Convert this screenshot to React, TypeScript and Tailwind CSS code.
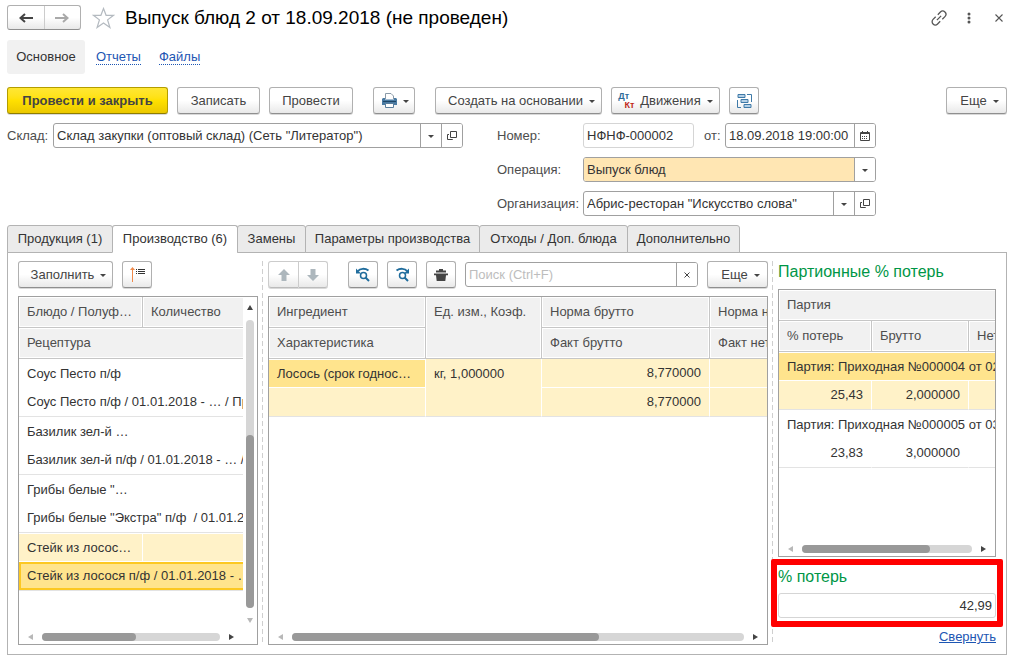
import type { ReactNode } from 'react';
import { clsx } from 'clsx';

const BUTTON =
  'flex h-[27px] shrink-0 items-center justify-center rounded-[3px] border border-[#b0b0b0] border-b-[#8f8f8f] bg-linear-to-b from-white from-50% to-[#e9e9e9] text-[#444] shadow-[0_1px_0_#d9d9d9]';
const HEAD =
  'h-[31px] overflow-hidden border-b border-[#c6c6c6] bg-[#f1f1f1] px-2 text-left font-normal text-ellipsis whitespace-nowrap text-[#4d4d4d] shadow-[inset_0_0_0_1px_#fff]';
const CELL = 'h-[29px] overflow-hidden px-2 whitespace-nowrap';

function Caret() {
  return (
    <svg className="mt-0.5 h-[3px] w-[6px] shrink-0" viewBox="0 0 6 3" fill="#444">
      <path d="M0 0h6L3 3z" />
    </svg>
  );
}

interface ButtonProps {
  children: ReactNode;
  label?: string;
  className?: string;
}

function Button({ children, label, className }: ButtonProps) {
  return (
    <button type="button" aria-label={label} className={clsx(BUTTON, className)}>
      {children}
    </button>
  );
}

function MenuButton({ children, label, className }: ButtonProps) {
  return (
    <Button label={label} className={clsx('gap-1.5', className)}>
      {children}
      <Caret />
    </Button>
  );
}

interface FieldProps {
  id: string;
  value: string;
  label?: string;
  className?: string;
  inputClass?: string;
  children?: ReactNode;
}

function Field({ id, value, label, className, inputClass, children }: FieldProps) {
  return (
    <div className={clsx('flex h-[25px] min-w-0 overflow-hidden rounded-[3px] border', className)}>
      <input
        id={id}
        aria-label={label}
        defaultValue={value}
        className={clsx('w-full min-w-0 flex-1 px-[3px] text-[#333] outline-none', inputClass)}
      />
      {children}
    </div>
  );
}

function FieldButton({ label, children }: { label: string; children: ReactNode }) {
  return (
    <button
      type="button"
      aria-label={label}
      className="flex w-[21px] shrink-0 items-center justify-center border-l border-[#a0a0a0] bg-white"
    >
      {children}
    </button>
  );
}

function OpenIcon() {
  return (
    <svg className="size-[10px]" viewBox="0 0 10 10" fill="none" stroke="#444">
      <path d="M3.5.5h6v6h-6zM2 3.5H.5v5h5V8" />
    </svg>
  );
}

function CalendarIcon() {
  return (
    <svg className="size-[10px]" viewBox="0 0 10 10" fill="none" stroke="#444">
      <path d="M.5 1.5h9v8h-9z" />
      <path d="M0 2.5h10M2.5 0v2M7.5 0v2" />
      <path d="M2 5.5h6M2 7.5h6" strokeDasharray="1 1" />
    </svg>
  );
}

function HistoryIcon({ flip }: { flip?: boolean }) {
  return (
    <svg className="h-[16px] w-[18px]" viewBox="0 0 18 16" fill="none" stroke="#1f6c9c">
      <g transform={flip ? 'translate(18 0) scale(-1 1)' : undefined}>
        <path d="M4 4C6 1.300 11 1.200 14.500 3.500" strokeWidth="2" />
        <path d="M2 1.500v5h5z" fill="#1f6c9c" stroke="none" />
      </g>
      <circle cx="9.500" cy="8.500" r="3" strokeWidth="1.500" />
      <path d="m11.500 10.500 3.500 3.500" strokeWidth="2" />
    </svg>
  );
}

function ArrowIcon({ down }: { down?: boolean }) {
  return (
    <svg className={clsx('size-3', down && 'rotate-180')} viewBox="0 0 12 12" fill="#adb7bd">
      <path d="M6 0 12 6H8.500v6h-5V6H0z" />
    </svg>
  );
}

function HScroll({ thumb }: { thumb: string }) {
  return (
    <div className="mt-auto flex h-[15px] shrink-0 items-center gap-[9px] px-[9px]">
      <svg className="h-[6px] w-[5px] shrink-0" viewBox="0 0 5 6" fill="#b8b8b8">
        <path d="M5 0v6L0 3z" />
      </svg>
      <div className="h-2 flex-1 rounded-full bg-[#d6d6d6]">
        <div className={clsx('h-2 rounded-full bg-[#999]', thumb)} />
      </div>
      <svg className="h-[6px] w-[5px] shrink-0" viewBox="0 0 5 6" fill="#444">
        <path d="M0 0v6l5-3z" />
      </svg>
    </div>
  );
}

function Divider() {
  return (
    <div className="mr-[5px] ml-1 w-px shrink-0 bg-[repeating-linear-gradient(#cfcfcf_0_5px,#fff_5px_8px)]" />
  );
}

const tabs = [
  { title: 'Продукция (1)', width: 'w-[106px]' },
  { title: 'Производство (6)', width: 'w-[126px]', active: true },
  { title: 'Замены', width: 'w-[69px]' },
  { title: 'Параметры производства', width: 'w-[175px]' },
  { title: 'Отходы / Доп. блюда', width: 'w-[149px]' },
  { title: 'Дополнительно', width: 'w-[113px]' },
];

const dishes = [
  { name: 'Соус Песто п/ф', recipe: 'Соус Песто п/ф / 01.01.2018 - … / Производство' },
  { name: 'Базилик зел-й …', recipe: 'Базилик зел-й п/ф / 01.01.2018 - … / Производство' },
  { name: 'Грибы белые "…', recipe: 'Грибы белые "Экстра" п/ф\u00a0 / 01.01.2018 - …' },
];

const batches = [
  { name: 'Партия: Приходная №000004 от 02.09.2018', loss: '25,43', gross: '2,000000', active: true },
  { name: 'Партия: Приходная №000005 от 03.09.2018', loss: '23,83', gross: '3,000000' },
];

function Header() {
  return (
    <header className="flex h-[25px] items-center">
      <div className="flex h-[25px] w-[74px] rounded-[3px] border border-[#b0b0b0] border-b-[#8f8f8f] bg-linear-to-b from-white from-50% to-[#e9e9e9]">
        <button type="button" aria-label="Назад" className="flex flex-1 items-center justify-center">
          <svg className="h-[10px] w-[14px]" viewBox="0 0 14 10" fill="none" stroke="#444" strokeWidth="2">
            <path d="M14 5H2M6 1 1.500 5 6 9" />
          </svg>
        </button>
        <button
          type="button"
          aria-label="Вперед"
          className="flex flex-1 items-center justify-center border-l border-[#ccc]"
        >
          <svg className="h-[10px] w-[14px]" viewBox="0 0 14 10" fill="none" stroke="#a9a9a9" strokeWidth="2">
            <path d="M0 5h12M8 1l4.500 4L8 9" />
          </svg>
        </button>
      </div>
      <button type="button" aria-label="В избранное" className="ml-[11px]">
        <svg className="h-[22px] w-[23px]" viewBox="0 0 23 22" fill="none" stroke="#b4bac0" strokeWidth="1.200">
          <path d="m11.500 1.500 2.600 6.800h7.400l-5.900 4.600 2.300 7.600-6.400-4.600-6.400 4.600 2.300-7.600L1.500 8.300h7.400z" />
        </svg>
      </button>
      <h1 className="ml-[10px] flex-1 text-[19px] text-black">Выпуск блюд 2 от 18.09.2018 (не проведен)</h1>
      <button type="button" aria-label="Ссылка">
        <svg className="size-4" viewBox="0 0 16 16" fill="none" stroke="#555" strokeWidth="1.300">
          <g transform="rotate(-45 8 8)">
            <path d="M6.500 4.800H2.800a3.200 3.200 0 0 0 0 6.400h3.700M9.500 4.800h3.700a3.200 3.200 0 0 1 0 6.400H9.500M5 8h6" />
          </g>
        </svg>
      </button>
      <button type="button" aria-label="Меню" className="ml-[20px]">
        <svg className="h-3 w-[4px]" viewBox="0 0 4 12" fill="#555">
          <circle cx="2" cy="2" r="1.500" />
          <circle cx="2" cy="6" r="1.500" />
          <circle cx="2" cy="10" r="1.500" />
        </svg>
      </button>
      <button type="button" aria-label="Закрыть" className="mr-1 ml-[24px]">
        <svg className="size-2" viewBox="0 0 8 8" stroke="#555" strokeWidth="1.100">
          <path d="m.5.5 7 7m0-7-7 7" />
        </svg>
      </button>
    </header>
  );
}

function Toolbar() {
  return (
    <div className="mt-[13px] flex">
      <button
        type="button"
        className="h-[27px] w-[161px] rounded-[3px] border border-[#b39d00] border-b-[#8f7d00] bg-linear-to-b from-[#ffe733] via-[#ffe000] to-[#ebc800] font-bold text-[#444] shadow-[0_1px_0_#d9d9d9]"
      >
        Провести и закрыть
      </button>
      <Button className="ml-[9px] w-[83px]">Записать</Button>
      <Button className="ml-[9px] w-[84px]">Провести</Button>
      <MenuButton label="Печать" className="ml-5 w-[42px] pl-0.5">
        <svg className="h-[15px] w-[15px]" viewBox="0 0 15 15">
          <path d="M3.500 6V.5h5.500l2.500 2.500v3" fill="#fff" stroke="#8a9aa8" />
          <path d="M1 5h2v1.500h9V5h2l1 1v6H0V6z" fill="#4a7ba3" />
          <path d="M1 8.500h13" stroke="#1e4666" />
          <path d="M3.500 10.500h8v4h-8z" fill="#fff" stroke="#5b7f9d" />
        </svg>
      </MenuButton>
      <MenuButton className="ml-5 w-[167px] pl-1.5">Создать на основании</MenuButton>
      <MenuButton className="ml-[9px] w-[109px]">
        <span className="relative h-[18px] w-4 text-[9px] leading-[9px] font-bold">
          <span className="absolute top-0 left-0 text-[#2d6b98]">Дт</span>
          <span className="absolute right-0 bottom-0 text-[#c0281c]">Кт</span>
        </span>
        Движения
      </MenuButton>
      <Button label="Структура подчиненности" className="ml-[9px] w-[30px]">
        <svg className="h-[14px] w-[15px]" viewBox="0 0 15 14" fill="#b5d0e6" stroke="#3f7aa8">
          <path d="M1 .5h7v3H1zM4 5.500h7v3H4zM7 10.500h7v3H7z" />
          <path d="M10 .5h4.500V8M.5 6v7.500H4" fill="none" />
        </svg>
      </Button>
      <MenuButton className="ml-auto w-[61px] pl-1.5">Еще</MenuButton>
    </div>
  );
}

function DocumentForm() {
  return (
    <div className="mt-[9px] grid grid-cols-[490fr_379fr_131fr] text-[#4d4d4d]">
      <div className="flex h-[25px] min-w-0 items-center pr-[34px]">
        <label htmlFor="store" className="w-[46px] shrink-0">
          Склад:
        </label>
        <Field
          id="store"
          value={'Склад закупки (оптовый склад) (Сеть "Литератор")'}
          className="flex-1 border-[#a0a0a0]"
        >
          <FieldButton label="Выбрать склад">
            <Caret />
          </FieldButton>
          <FieldButton label="Открыть склад">
            <OpenIcon />
          </FieldButton>
        </Field>
      </div>
      <div className="flex min-w-0 flex-col gap-[9px]">
        <div className="flex items-center">
          <label htmlFor="number" className="w-[86px] shrink-0">
            Номер:
          </label>
          <Field id="number" value="НФНФ-000002" className="w-[111px] shrink-0 border-[#d5d5d5]" />
          <label htmlFor="date" className="ml-[10px] w-[21px] shrink-0">
            от:
          </label>
          <Field id="date" value="18.09.2018 19:00:00" className="flex-1 border-[#a0a0a0]">
            <FieldButton label="Календарь">
              <CalendarIcon />
            </FieldButton>
          </Field>
        </div>
        <div className="flex items-center">
          <label htmlFor="operation" className="w-[86px] shrink-0">
            Операция:
          </label>
          <Field
            id="operation"
            value="Выпуск блюд"
            className="flex-1 border-[#a0a0a0]"
            inputClass="bg-[#ffe6b3]"
          >
            <FieldButton label="Выбрать операцию">
              <Caret />
            </FieldButton>
          </Field>
        </div>
        <div className="flex items-center">
          <label htmlFor="company" className="w-[86px] shrink-0">
            Организация:
          </label>
          <Field id="company" value={'Абрис-ресторан "Искусство слова"'} className="flex-1 border-[#a0a0a0]">
            <FieldButton label="Выбрать организацию">
              <Caret />
            </FieldButton>
            <FieldButton label="Открыть организацию">
              <OpenIcon />
            </FieldButton>
          </Field>
        </div>
      </div>
    </div>
  );
}

function Dishes() {
  return (
    <section className="flex w-60 shrink-0 flex-col">
      <div className="flex gap-[9px]">
        <MenuButton className="w-[95px] pl-1.5">Заполнить</MenuButton>
        <Button label="Порядок" className="w-[30px]">
          <svg className="h-[15px] w-4" viewBox="0 0 16 15" fill="none">
            <path d="M3.500 15V1" stroke="#f08a4b" />
            <path d="M3.500 0 6 3H1z" fill="#f08a4b" />
            <path d="M9 2.500h7M9 4.500h7M9 6.500h7M7 2.500h1M7 4.500h1M7 6.500h1" stroke="#333" />
          </svg>
        </Button>
      </div>
      <div className="mt-2 flex flex-1 flex-col border border-[#a0a0a0]">
        <div className="flex flex-1">
          <div className="min-w-0 flex-1 overflow-hidden">
            <table className="w-[320px] table-fixed border-separate border-spacing-0">
              <colgroup>
                <col className="w-[124px]" />
                <col />
              </colgroup>
              <thead>
                <tr>
                  <th className={clsx(HEAD, 'border-r')}>Блюдо / Полуф…</th>
                  <th className={HEAD}>Количество</th>
                </tr>
                <tr>
                  <th colSpan={2} className={HEAD}>
                    Рецептура
                  </th>
                </tr>
              </thead>
              {dishes.map((dish) => (
                <tbody key={dish.name}>
                  <tr>
                    <td className={CELL}>{dish.name}</td>
                    <td className={CELL} />
                  </tr>
                  <tr>
                    <td colSpan={2} className={clsx(CELL, 'border-b border-[#e3e3e3]')}>
                      {dish.recipe}
                    </td>
                  </tr>
                </tbody>
              ))}
              <tbody>
                <tr>
                  <td className={clsx(CELL, 'border-y border-r border-white bg-[#fff2c8]')}>Стейк из лосос…</td>
                  <td className={clsx(CELL, 'border-y border-white bg-[#fff2c8]')} />
                </tr>
                <tr>
                  <td
                    colSpan={2}
                    className={clsx(
                      CELL,
                      'border-b border-[#e3e3e3] bg-[#ffe48d] shadow-[inset_0_0_0_2px_#fcc822]',
                    )}
                  >
                    Стейк из лосося п/ф / 01.01.2018 - …
                  </td>
                </tr>
              </tbody>
            </table>
          </div>
          <div className="flex w-[14px] shrink-0 flex-col items-center gap-[10px] pt-2 pb-1.5">
            <svg className="h-[5px] w-[6px] shrink-0" viewBox="0 0 6 5" fill="#444">
              <path d="M3 0 6 5H0z" />
            </svg>
            <div className="flex w-2 flex-1 flex-col justify-end rounded-full bg-[#d6d6d6]">
              <div className="h-3/5 rounded-full bg-[#999]" />
            </div>
            <svg className="h-[5px] w-[6px] shrink-0" viewBox="0 0 6 5" fill="#b8b8b8">
              <path d="M0 0h6L3 5z" />
            </svg>
          </div>
        </div>
        <div className="flex pr-[14px]">
          <div className="flex-1">
            <HScroll thumb="w-[53%]" />
          </div>
        </div>
      </div>
    </section>
  );
}

function Ingredients() {
  const cell = clsx(CELL, 'border-r border-b border-white bg-[#fff2c8]');
  return (
    <section className="flex min-w-0 flex-1 flex-col">
      <div className="flex">
        <div className="flex">
          <Button label="Вверх" className="w-[31px] rounded-r-none border-[#ccc] border-b-[#bbb]">
            <ArrowIcon />
          </Button>
          <Button label="Вниз" className="w-[29px] rounded-l-none border-l-0 border-[#ccc] border-b-[#bbb]">
            <ArrowIcon down />
          </Button>
        </div>
        <Button label="Предыдущий" className="ml-5 w-[30px]">
          <HistoryIcon />
        </Button>
        <Button label="Следующий" className="ml-[9px] w-[30px]">
          <HistoryIcon flip />
        </Button>
        <Button label="Блюдо" className="ml-[9px] w-[30px]">
          <svg className="h-3 w-[14px]" viewBox="0 0 14 12" fill="#444">
            <path d="M5 0h4v1.500h3V3.500H2v-2h3zM0 4.500h14v1.800h-2L11.300 12H2.700L2 6.300H0z" />
          </svg>
        </Button>
        <div className="ml-[9px] flex h-[25px] min-w-0 flex-1 self-center overflow-hidden rounded-[3px] border border-[#a0a0a0]">
          <input
            type="text"
            aria-label="Поиск"
            placeholder="Поиск (Ctrl+F)"
            className="min-w-0 flex-1 px-[3px] outline-none placeholder:text-[#bdbdbd]"
          />
          <FieldButton label="Очистить">
            <svg className="size-[6px]" viewBox="0 0 6 6" stroke="#444">
              <path d="m.5.500 5 5m0-5-5 5" />
            </svg>
          </FieldButton>
        </div>
        <MenuButton className="ml-[9px] w-[61px] pl-1.5">Еще</MenuButton>
      </div>
      <div className="mt-2 flex flex-1 flex-col overflow-hidden border border-[#a0a0a0]">
        <div className="overflow-hidden">
          <table className="w-full min-w-[560px] table-fixed border-separate border-spacing-0">
            <colgroup>
              <col className="w-[157px]" />
              <col className="w-[116px]" />
              <col className="w-[168px]" />
              <col />
            </colgroup>
            <thead>
              <tr>
                <th className={clsx(HEAD, 'border-r')}>Ингредиент</th>
                <th rowSpan={2} className={clsx(HEAD, 'border-r pt-[5px] align-top')}>
                  Ед. изм., Коэф.
                </th>
                <th className={clsx(HEAD, 'border-r')}>Норма брутто</th>
                <th className={HEAD}>Норма нетто</th>
              </tr>
              <tr>
                <th className={clsx(HEAD, 'border-r')}>Характеристика</th>
                <th className={clsx(HEAD, 'border-r')}>Факт брутто</th>
                <th className={HEAD}>Факт нетто</th>
              </tr>
            </thead>
            <tbody>
              <tr>
                <td className={clsx(CELL, 'border border-l-0 border-white bg-[#ffe48d]')}>Лосось (срок годнос…</td>
                <td rowSpan={2} className={clsx(cell, 'border-b-[#e3e3e3] pt-[5px] align-top')}>
                  кг, 1,000000
                </td>
                <td className={clsx(cell, 'text-right')}>8,770000</td>
                <td className={cell} />
              </tr>
              <tr>
                <td className={clsx(cell, 'border-b-[#e3e3e3]')} />
                <td className={clsx(cell, 'border-b-[#e3e3e3] text-right')}>8,770000</td>
                <td className={clsx(cell, 'border-b-[#e3e3e3]')} />
              </tr>
            </tbody>
          </table>
        </div>
        <HScroll thumb="w-[68%]" />
      </div>
    </section>
  );
}

function Batches() {
  return (
    <section className="flex w-[218px] shrink-0 flex-col">
      <h2 className="h-7 text-[16px] leading-[21px] text-[#009646]">Партионные % потерь</h2>
      <div className="flex flex-1 flex-col overflow-hidden border border-[#a0a0a0]">
        <div className="overflow-hidden">
          <table className="w-[300px] table-fixed border-separate border-spacing-0">
            <colgroup>
              <col className="w-[93px]" />
              <col className="w-[97px]" />
              <col />
            </colgroup>
            <thead>
              <tr>
                <th colSpan={3} className={HEAD}>
                  Партия
                </th>
              </tr>
              <tr>
                <th className={clsx(HEAD, 'border-r')}>% потерь</th>
                <th className={clsx(HEAD, 'border-r')}>Брутто</th>
                <th className={HEAD}>Нетто</th>
              </tr>
            </thead>
            {batches.map((batch) => {
              const cell = clsx(CELL, 'border-b border-b-[#e3e3e3] text-right', batch.active && 'bg-[#fff2c8]');
              return (
                <tbody key={batch.name}>
                  <tr>
                    <td
                      colSpan={3}
                      className={clsx(CELL, batch.active && 'border-y border-white bg-[#ffe48d]')}
                    >
                      {batch.name}
                    </td>
                  </tr>
                  <tr>
                    <td className={clsx(cell, 'border-r border-r-white')}>{batch.loss}</td>
                    <td className={clsx(cell, 'border-r border-r-white')}>{batch.gross}</td>
                    <td className={cell} />
                  </tr>
                </tbody>
              );
            })}
          </table>
        </div>
        <HScroll thumb="w-[75%]" />
      </div>
      <div className="-mx-[7px] mt-[2px] rounded-[2px] border-[6px] border-[#f00] p-px pb-[3px]">
        <label htmlFor="loss" className="block h-[27px] text-[16px] leading-[21px] text-[#009646]">
          % потерь
        </label>
        <Field id="loss" value="42,99" className="border-[#d5d5d5]" inputClass="text-right" />
      </div>
      <a href="#collapse" className="mt-[2px] self-end leading-4 text-[#1d56b3] underline">
        Свернуть
      </a>
    </section>
  );
}

export default function App() {
  return (
    <div className="flex min-h-screen flex-col bg-white pt-[5px] pr-[13px] pb-[5px] pl-[7px] font-['Liberation_Sans',Arial,sans-serif] text-[13px] leading-5 text-[#333]">
      <Header />
      <nav className="mt-[10px] flex h-[34px] items-center">
        <a href="#main" className="flex h-[34px] w-[78px] items-center justify-center rounded-[3px] bg-[#f1f1f1]">
          Основное
        </a>
        <a href="#reports" className="ml-[11px] border-b border-dotted border-[#1d56b3] leading-[14px] text-[#1d56b3]">
          Отчеты
        </a>
        <a href="#files" className="ml-[18px] border-b border-dotted border-[#1d56b3] leading-[14px] text-[#1d56b3]">
          Файлы
        </a>
      </nav>
      <Toolbar />
      <DocumentForm />
      <div role="tablist" className="relative z-10 mt-[9px] flex">
        {tabs.map((tab) => (
          <button
            key={tab.title}
            type="button"
            role="tab"
            aria-selected={!!tab.active}
            className={clsx(
              '-mr-px h-7 shrink-0 rounded-t-[3px] border border-[#b3b3b3] whitespace-nowrap',
              tab.active ? 'border-b-white bg-white' : 'bg-[#ebebeb]',
              tab.width,
            )}
          >
            {tab.title}
          </button>
        ))}
      </div>
      <main className="-mt-px flex flex-1 border border-[#b3b3b3] px-[10px] pt-2 pb-[9px]">
        <Dishes />
        <Divider />
        <Ingredients />
        <Divider />
        <Batches />
      </main>
    </div>
  );
}
